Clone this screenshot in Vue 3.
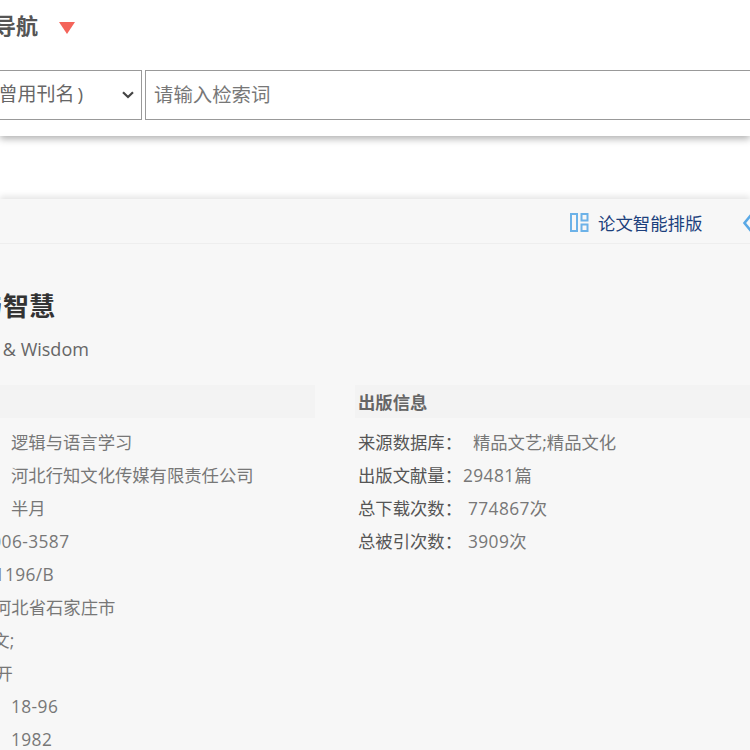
<script setup>
import { computed } from 'vue'

const labelShift = 140
const rawBasic = [
  { label: '专题名称：', x: 11, value: '逻辑与语言学习' },
  { label: '主办单位：', x: 11, value: '河北行知文化传媒有限责任公司' },
  { label: '出版周期：', x: 11, value: '半月' },
  { label: 'ISSN：', x: -19, value: '1006-3587', num: true },
  { label: 'CN：', x: -32, value: '13-1196/B', num: true },
  { label: '出版地：', x: -6, value: '河北省石家庄市' },
  { label: '语种：', x: -25, value: '中文;' },
  { label: '开本：', x: -25, value: '16开', num: true },
  { label: '邮发代号：', x: 11, value: '18-96', num: true },
  { label: '创刊时间：', x: 11, value: '1982', num: true }
]
const basic = computed(() => rawBasic.map(r => ({ ...r, w: r.x + labelShift - 3 })))
const pub = [
  { label: '来源数据库：', value: '精品文艺;精品文化', gap: 'g1' },
  { label: '出版文献量：', value: '29481篇', gap: 'g2', num: true },
  { label: '总下载次数：', value: '774867次', gap: 'g3', num: true },
  { label: '总被引次数：', value: '3909次', gap: 'g3', num: true }
]
</script>

<template>
  <div class="page">
    <header class="head">
      <div class="title-row">
        <h2 class="nav-title">期刊导航</h2>
        <span class="tri"></span>
      </div>
      <div class="search-row">
        <div class="select">
          <span class="select-text">刊名(含曾用刊名<span class="paren">)</span></span>
          <svg class="chev" width="12" height="8" viewBox="0 0 12 8"><path d="M1 1.2 6 6 11 1.2" fill="none" stroke="#444" stroke-width="2.2"/></svg>
        </div>
        <div class="input">请输入检索词</div>
      </div>
    </header>

    <main class="card">
      <div class="toolbar">
        <svg class="ico" width="19" height="19" viewBox="0 0 19 19" fill="none" stroke="#6cb2e8" stroke-width="2">
          <rect x="1" y="1" width="6" height="17"/>
          <rect x="11.5" y="1" width="6" height="6.5"/>
          <rect x="11.5" y="11.5" width="6" height="6.5"/>
        </svg>
        <span class="tool-text">论文智能排版</span>
        <svg class="ico2" width="18" height="20" viewBox="0 0 18 20" fill="none" stroke="#5aa9e6" stroke-width="2.6">
          <path d="M9 2 2.5 10 9 18"/>
        </svg>
      </div>

      <h1 class="journal">逻辑与智慧</h1>
      <p class="en">Logic &amp; Wisdom</p>

      <div class="cols">
        <section class="col-l">
          <div class="bar">基本信息</div>
          <div v-for="(r, i) in basic" :key="i" class="row">
            <span class="lab-l" :style="{ width: r.w + 'px' }">{{ r.label }}</span>
            <span :class="['val', { num: r.num }]">{{ r.value }}</span>
          </div>
        </section>
        <section class="col-r">
          <div class="bar">出版信息</div>
          <div v-for="(r, i) in pub" :key="i" class="row">
            <span class="lab">{{ r.label }}</span>
            <span :class="['val', r.gap, { num: r.num }]">{{ r.value }}</span>
          </div>
        </section>
      </div>
    </main>
  </div>
</template>

<style scoped>
.page {
  width: 750px;
  height: 750px;
  overflow: hidden;
  background: #fff;
  font-family: "Open Sans", "Noto Sans CJK SC", sans-serif;
  color: #666;
  position: relative;
}
.head {
  height: 136px;
  background: #fff;
  box-shadow: 0 3px 7px rgba(0, 0, 0, 0.3);
  position: relative;
  padding-top: 9px;
  box-sizing: border-box;
}
.title-row {
  display: flex;
  align-items: center;
  height: 32px;
  margin-left: -50px;
}
.nav-title {
  margin: 0;
  font-size: 22px;
  font-weight: 600;
  color: #555;
  line-height: 32px;
  width: 109px;
  white-space: nowrap;
}
.tri {
  width: 0;
  height: 0;
  border-left: 8px solid transparent;
  border-right: 8px solid transparent;
  border-top: 12px solid #f4645a;
  margin-top: 5px;
}
.search-row {
  display: flex;
  margin-top: 29px;
  height: 50px;
  margin-left: -68px;
  gap: 3px;
}
.select {
  width: 210px;
  flex: none;
  box-sizing: border-box;
  border: 1.5px solid #999;
  display: flex;
  align-items: center;
  padding: 0 7px 4px 3px;
  font-size: 19px;
  color: #666;
  white-space: nowrap;
}
.paren { margin-left: 3px; }
.chev { margin-left: auto; margin-top: 4px; }
.input {
  width: 700px;
  flex: none;
  box-sizing: border-box;
  border: 1.5px solid #999;
  display: flex;
  align-items: center;
  padding: 0 0 4px 8px;
  font-size: 19.4px;
  color: #777;
}
.card {
  margin-top: 63px;
  height: 560px;
  background: #f7f7f7;
  box-shadow: 0 -3px 6px rgba(0, 0, 0, 0.1);
  position: relative;
}
.toolbar {
  height: 45px;
  box-sizing: border-box;
  border-bottom: 1px solid #eee;
  display: flex;
  align-items: center;
  padding: 3px 0 0 570px;
  white-space: nowrap;
  width: 800px;
}
.ico { flex: none; }
.tool-text {
  margin-left: 9px;
  font-size: 17.4px;
  color: #1c3f7c;
  flex: none;
  line-height: 24px;
}
.ico2 { flex: none; margin-left: 40px; }
.journal {
  margin: 44px 0 0 -75px;
  font-size: 26px;
  line-height: 36px;
  font-weight: 600;
  color: #333;
  white-space: nowrap;
}
.en {
  margin: 13px 0 0 -45px;
  font-size: 18px;
  line-height: 24px;
  color: #666;
  white-space: nowrap;
}
.cols {
  display: grid;
  grid-template-columns: 355px 1fr;
  margin-top: 24px;
}
.col-l { margin-left: -140px; min-width: 0; }
.col-r { min-width: 0; }
.bar {
  height: 33px;
  line-height: 35px;
  background: #f3f3f3;
  font-size: 17.33px;
  font-weight: 700;
  color: #666;
  padding-left: 3px;
  margin-bottom: 8px;
  white-space: nowrap;
}
.col-l .bar {
  width: 455px;
  padding-left: 60px;
  box-sizing: border-box;
}
.row {
  display: flex;
  height: 33px;
  line-height: 33px;
  font-size: 17.33px;
  white-space: nowrap;
  color: #555;
}
.lab-l {
  flex: none;
  text-align: right;
  margin-right: 3px;
}
.col-r .row { padding-left: 3px; }
.val { color: #777; }
.num { letter-spacing: 0.4px; }
.g1 { margin-left: 11px; }
.g2 { margin-left: 1px; }
.g3 { margin-left: 6px; }
</style>
